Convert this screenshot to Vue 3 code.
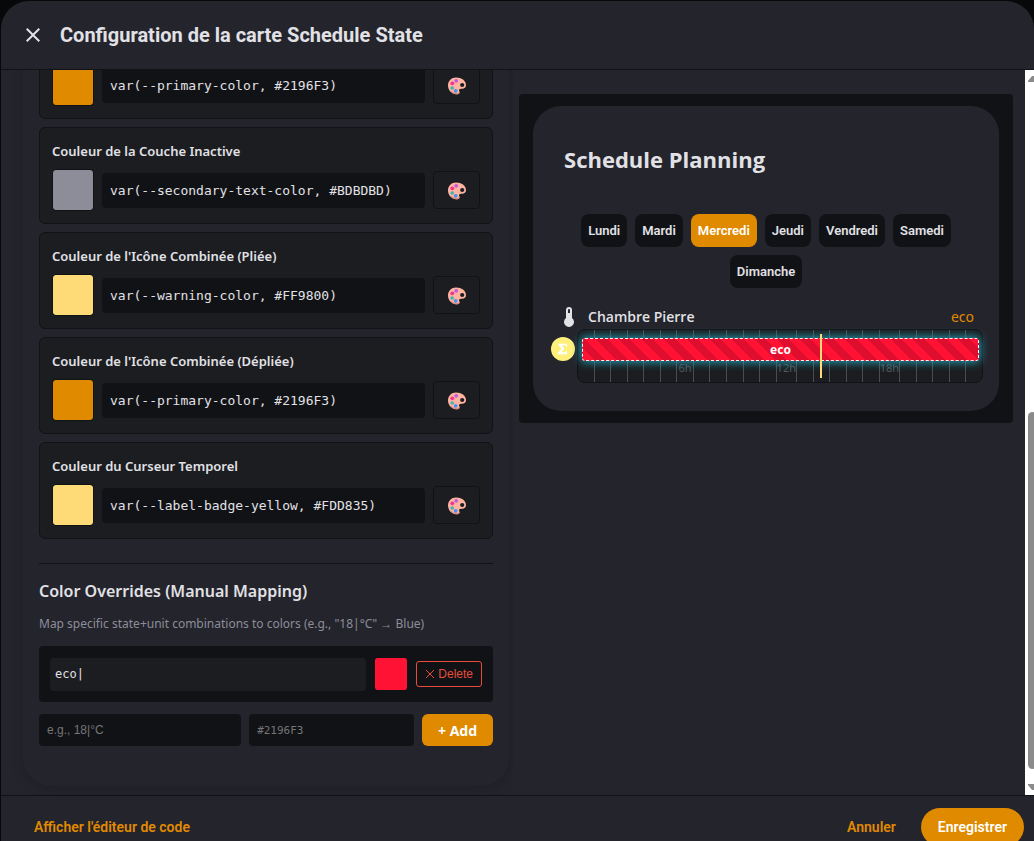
<script setup>
import { ref } from 'vue'

const colorFields = ref([
  { id: 'active', value: 'var(--primary-color, #2196F3)', color: '#e08a00' },
  { id: 'inactive', label: 'Couleur de la Couche Inactive', value: 'var(--secondary-text-color, #BDBDBD)', color: '#8d8d99' },
  { id: 'folded', label: "Couleur de l'Icône Combinée (Pliée)", value: 'var(--warning-color, #FF9800)', color: '#ffdb78' },
  { id: 'unfolded', label: "Couleur de l'Icône Combinée (Dépliée)", value: 'var(--primary-color, #2196F3)', color: '#e08a00' },
  { id: 'cursor', label: 'Couleur du Curseur Temporel', value: 'var(--label-badge-yellow, #FDD835)', color: '#ffdb78' },
])

const override = ref({ key: 'eco|', color: '#ff1233' })
const newKey = ref('')
const newColor = ref('')

const days = ['Lundi', 'Mardi', 'Mercredi', 'Jeudi', 'Vendredi', 'Samedi', 'Dimanche']
const activeDay = ref('Mercredi')

const hours = Array.from({ length: 24 }, (_, h) => (h && h % 6 === 0 ? `${h}h` : ''))
const nowPercent = 60
</script>

<template>
  <div class="screen">
    <section class="dialog" role="dialog" aria-labelledby="dialog-title">
      <header class="dialog-header">
        <button class="close" type="button" aria-label="Fermer">
          <svg viewBox="0 0 24 24" width="24" height="24"><path fill="currentColor" d="M19 6.41 17.59 5 12 10.59 6.41 5 5 6.41 10.59 12 5 17.59 6.41 19 12 13.41 17.59 19 19 17.59 13.41 12z" /></svg>
        </button>
        <h1 id="dialog-title">Configuration de la carte Schedule State</h1>
      </header>

      <main class="dialog-body">
        <div class="editor">
          <div class="panel">
            <div class="fields">
              <div v-for="field in colorFields" :key="field.id" class="field">
                <label v-if="field.label" :for="field.id">{{ field.label }}</label>
                <div class="field-row">
                  <input v-model="field.color" class="swatch" type="color" :aria-label="field.label || 'Couleur'">
                  <input :id="field.id" v-model="field.value" class="mono" type="text" spellcheck="false" :aria-label="field.label || 'Couleur'">
                  <button class="palette" type="button" aria-label="Palette">
                    <svg viewBox="0 0 20 20" width="20" height="20">
                      <path fill="#ffb3a0" d="M9 1.5C4.500 1.500 1 5 1 9.500c0 4.500 3.500 8.500 8 8.800 2 .2 3.600-.5 3.600-2 0-1.300-.8-1.600-.5-2.600.3-.9 1.500-1 3-1 2.300 0 3.900-1.200 3.900-3.700C19 4.500 14.500 1.500 9 1.500z" />
                      <path fill="#d98b80" d="M3.500 14.500c1.500 2.200 3.400 3.500 5.500 3.800 2 .2 3.600-.5 3.600-2-1.800 1.400-5.800.8-9.100-1.800z" />
                      <circle cx="15.200" cy="9" r="2.100" fill="#1c1d20" />
                      <circle cx="9.200" cy="4.800" r="1.900" fill="#c05be0" />
                      <circle cx="5.300" cy="7.300" r="1.900" fill="#f0358d" />
                      <circle cx="5.200" cy="12" r="1.800" fill="#3fb5b5" />
                      <circle cx="8.700" cy="14.800" r="1.900" fill="#4a90f0" />
                    </svg>
                  </button>
                </div>
              </div>
            </div>

            <section class="overrides">
              <h2>Color Overrides (Manual Mapping)</h2>
              <p>Map specific state+unit combinations to colors (e.g., "18|°C" → Blue)</p>
              <div class="override">
                <input v-model="override.key" class="mono key" type="text" aria-label="State and unit" spellcheck="false">
                <input v-model="override.color" class="swatch small" type="color" aria-label="Override color">
                <button class="delete" type="button">
                  <svg viewBox="0 0 10 10" width="10" height="10"><path d="M1 1l8 8M9 1L1 9" fill="none" stroke="currentColor" /></svg>
                  Delete
                </button>
              </div>
              <form class="add-row" @submit.prevent>
                <input v-model="newKey" class="new-key" type="text" placeholder="e.g., 18|°C" aria-label="New state and unit">
                <input v-model="newColor" class="new-color" type="text" placeholder="#2196F3" aria-label="New color">
                <button class="add" type="submit">+ Add</button>
              </form>
            </section>
          </div>
        </div>

        <div class="preview">
          <div class="preview-frame">
            <article class="card">
              <h2>Schedule Planning</h2>
              <nav class="days" aria-label="Jours">
                <button v-for="day in days" :key="day" type="button" :class="{ active: day === activeDay }" @click="activeDay = day">{{ day }}</button>
              </nav>
              <div class="room">
                <svg class="thermo" viewBox="0 0 24 24" width="24" height="24"><path fill="#e1e1e6" fill-rule="evenodd" d="M15 13V5a3 3 0 0 0-6 0v8a5 5 0 1 0 6 0M12 4a1 1 0 0 1 1 1v3h-2V5a1 1 0 0 1 1-1" /></svg>
                <span class="room-name">Chambre Pierre</span>
                <span class="room-state">eco</span>
              </div>
              <div class="schedule">
                <button class="sum" type="button" aria-label="Combiner">
                  <svg viewBox="0 0 24 24" width="16" height="16"><path fill="#fff" d="M5 4h13v5h-1l-1-2.500H10.500L14 11.500 9.500 17H16l1-2.500h1V20H4v-1.500L9.500 12 5 5.500z" /></svg>
                </button>
                <div class="timeline">
                  <div class="hours">
                    <span v-for="(hour, i) in hours" :key="i">{{ hour }}</span>
                  </div>
                  <div class="block">eco</div>
                  <div class="now" :style="{ left: nowPercent + '%' }"></div>
                </div>
              </div>
            </article>
          </div>
        </div>

        <div class="scrollbar" aria-hidden="true">
          <svg class="arrow" viewBox="0 0 10 6" width="10" height="6"><path fill="#8b8b8b" d="M0 6V5l4-5h2l4 5v1z" /></svg>
          <div class="track"><div class="thumb"></div></div>
          <svg class="arrow" viewBox="0 0 10 6" width="10" height="6"><path fill="#8b8b8b" d="M0 0v1l4 5h2l4-5V0z" /></svg>
        </div>
      </main>

      <footer class="dialog-footer">
        <button class="text-button" type="button">Afficher l'éditeur de code</button>
        <div class="actions">
          <button class="text-button" type="button">Annuler</button>
          <button class="save" type="button">Enregistrer</button>
        </div>
      </footer>
    </section>
  </div>
</template>

<style>
body {
  background: #07080a;
}
</style>

<style scoped>
* {
  box-sizing: border-box;
}
.screen {
  height: 100vh;
  overflow: hidden;
  padding: 1px 0 0 1px;
  color: #e1e1e6;
  font-family: "Noto Sans", "Open Sans", sans-serif;
}
button,
input {
  margin: 0;
  border: 0;
  font-family: inherit;
  color: inherit;
}
button {
  cursor: pointer;
}
h1,
h2,
p {
  margin: 0;
}
.dialog {
  display: flex;
  flex-direction: column;
  height: calc(100vh + 20px);
  background: #24242c;
  border-radius: 28px 28px 0 0;
  overflow: hidden;
}
.dialog-header {
  display: flex;
  align-items: center;
  gap: 15px;
  flex: none;
  height: 69px;
  padding: 0 20px;
  border-bottom: 1px solid #111215;
}
.close {
  display: flex;
  padding: 0;
  background: none;
}
h1 {
  font: 700 20px/28px Roboto, sans-serif;
}
.dialog-body {
  display: flex;
  flex: 1;
  min-height: 0;
}
.editor {
  display: flex;
  flex-direction: column;
  justify-content: flex-end;
  flex: 1 1 50%;
  min-width: 0;
  overflow: hidden;
  padding: 0 4px 9px 22px;
}
.panel {
  flex: none;
  padding: 16px 16px 40px;
  border-radius: 28px;
  box-shadow: 0 2px 8px 2px #202127;
}
.fields {
  display: grid;
  gap: 8px;
}
.field {
  padding: 12px;
  border: 1px solid #111215;
  border-radius: 6px;
  background: #1c1d20;
}
.field label {
  display: block;
  margin-bottom: 6px;
  font-size: 13px;
  font-weight: 600;
  line-height: 23px;
}
.field-row {
  display: flex;
  align-items: center;
  gap: 8px;
}
.swatch {
  flex: none;
  width: 42px;
  height: 42px;
  padding: 0;
  border: 1px solid #111215;
  border-radius: 4px;
  background: none;
  appearance: none;
}
.swatch::-webkit-color-swatch-wrapper {
  padding: 0;
}
.swatch::-webkit-color-swatch {
  border: 0;
  border-radius: 2px;
}
.mono {
  flex: 1;
  min-width: 0;
  height: 35px;
  padding: 0 8px;
  border-radius: 4px;
  background: #111215;
  font: 13px "DejaVu Sans Mono", monospace;
}
.palette {
  display: flex;
  align-items: center;
  justify-content: center;
  width: 47px;
  height: 38px;
  padding: 2px 0 0;
  border: 1px solid #111215;
  border-radius: 4px;
  background: none;
}
.overrides {
  margin-top: 24px;
  padding-top: 16px;
  border-top: 1px solid #111215;
}
.overrides h2 {
  font-size: 16px;
  font-weight: 600;
  line-height: 22px;
}
.overrides p {
  margin: 12px 0;
  color: #8d8d99;
  font-size: 12px;
  line-height: 20px;
}
.override {
  display: flex;
  align-items: center;
  gap: 9px;
  height: 56px;
  padding: 0 11px;
  border-radius: 4px;
  background: #111215;
}
.key {
  height: 33px;
  padding: 0 5px;
  background: #1c1d20;
  font-size: 12px;
}
.small {
  width: 32px;
  height: 32px;
  border: 0;
  border-radius: 2px;
}
.delete {
  display: flex;
  align-items: center;
  gap: 3px;
  height: 26px;
  padding: 0 8px;
  border: 1px solid #e74c3c;
  border-radius: 3px;
  background: none;
  color: #e74c3c;
  font: 12px "Liberation Sans", sans-serif;
}
.add-row {
  display: flex;
  gap: 8px;
  margin-top: 12px;
}
.new-key,
.new-color {
  min-width: 0;
  height: 32px;
  padding: 0 8px;
  border-radius: 4px;
  background: #111215;
  font: 12px "Liberation Sans", sans-serif;
}
.new-key {
  flex: 5;
}
.new-color {
  flex: 4;
  font-family: "DejaVu Sans Mono", monospace;
  font-size: 11px;
}
.new-key::placeholder,
.new-color::placeholder {
  color: #757575;
}
.add {
  width: 71px;
  height: 32px;
  padding: 0;
  border-radius: 6px;
  background: #e08a00;
  color: #fff;
  font-size: 14px;
  font-weight: 700;
}
.preview {
  flex: 1 1 50%;
  min-width: 0;
  padding: 24px 12px 0 6px;
}
.preview-frame {
  padding: 12px 14px;
  border-radius: 4px;
  background: #111215;
}
.card {
  padding: 38px 16px 28px;
  border-radius: 28px;
  background: #24242c;
}
.card h2 {
  padding-left: 15px;
  font-family: "Open Sans", "Noto Sans", sans-serif;
  font-size: 22px;
  font-weight: 700;
  line-height: 30px;
}
.days {
  display: flex;
  flex-wrap: wrap;
  justify-content: center;
  gap: 8px;
  margin-top: 40px;
}
.days button {
  height: 33px;
  padding: 0 7px;
  border-radius: 8px;
  background: #111215;
  font: 600 13px Roboto, sans-serif;
}
.days .active {
  background: #e08a00;
  color: #fff;
}
.room {
  display: flex;
  align-items: center;
  height: 24px;
  margin-top: 17px;
  padding: 0 9px 0 8px;
  font-size: 14px;
  line-height: 24px;
}
.room-name {
  flex: 1;
  margin-left: 7px;
  font-family: "Open Sans", "Noto Sans", sans-serif;
  font-weight: 600;
}
.room-state {
  color: #e08a00;
}
.schedule {
  display: flex;
  align-items: flex-start;
  gap: 2px;
  padding-left: 2px;
}
.sum {
  display: flex;
  align-items: center;
  justify-content: center;
  flex: none;
  width: 24px;
  height: 24px;
  margin-top: 8px;
  padding: 0;
  border-radius: 50%;
  background: #fff07c;
}
.timeline {
  position: relative;
  flex: 1;
  height: 54px;
  border: 1px solid #111215;
  border-radius: 8px;
  background: #1c1d20;
}
.hours {
  display: flex;
  height: 100%;
}
.hours span {
  display: flex;
  flex: 1;
  align-items: flex-end;
  justify-content: center;
  padding-bottom: 7px;
  border-right: 1px solid #4b4c52;
  color: #54565c;
  font-size: 11px;
  line-height: 14px;
}
.hours span:last-child {
  border-right: 0;
}
.block {
  position: absolute;
  top: 8px;
  left: 1%;
  right: 3px;
  height: 23px;
  border: 1px dashed #fff;
  border-radius: 3px;
  background: repeating-linear-gradient(45deg, #ff1233 0 8px, #df0e2e 8px 16px);
  box-shadow: 0 0 10px 1px #1fa5bb;
  color: #fff;
  font-size: 12px;
  font-weight: 700;
  line-height: 22px;
  text-align: center;
}
.now {
  position: absolute;
  top: 4px;
  bottom: 4px;
  width: 2px;
  background: #ffdb78;
}
.scrollbar {
  display: flex;
  flex-direction: column;
  flex: none;
  width: 9px;
  padding: 6px 0 5px 3px;
  overflow: hidden;
  background: #fff;
}
.arrow {
  flex: none;
}
.track {
  display: flex;
  flex-direction: column;
  justify-content: flex-end;
  flex: 1;
  padding-bottom: 15px;
}
.thumb {
  width: 9px;
  height: 52%;
  border-radius: 5px;
  background: #8b8b8b;
}
.dialog-footer {
  display: flex;
  align-items: flex-start;
  justify-content: space-between;
  flex: none;
  padding: 12px 10px 16px 33px;
  border-top: 1px solid #111215;
}
.actions {
  display: flex;
  gap: 25px;
}
.text-button,
.save {
  height: 38px;
  padding: 0;
  background: none;
  color: #e08a00;
  font: 600 14px Roboto, sans-serif;
}
.save {
  padding: 0 17px;
  border-radius: 20px;
  background: #e08a00;
  color: #fff;
}
</style>
